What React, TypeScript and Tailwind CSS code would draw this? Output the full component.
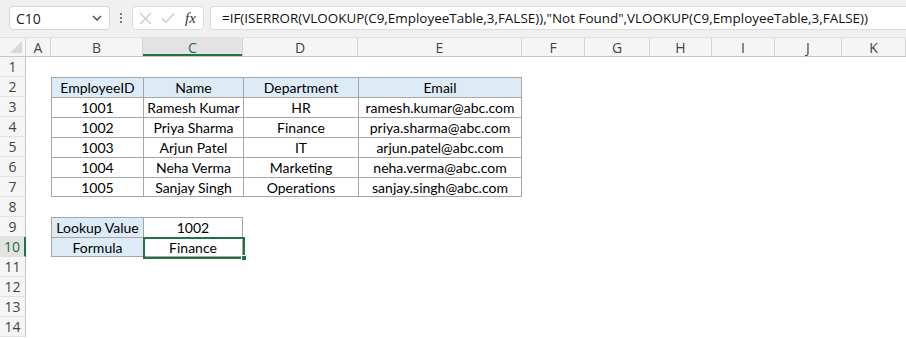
import React from 'react';

const COLS = [
  { id: 'A', w: 25 },
  { id: 'B', w: 92 },
  { id: 'C', w: 100 },
  { id: 'D', w: 115 },
  { id: 'E', w: 164 },
  { id: 'F', w: 63 },
  { id: 'G', w: 65 },
  { id: 'H', w: 62 },
  { id: 'I', w: 63 },
  { id: 'J', w: 67 },
  { id: 'K', w: 64 },
];

const FORMULA =
  '=IF(ISERROR(VLOOKUP(C9,EmployeeTable,3,FALSE)),"Not Found",VLOOKUP(C9,EmployeeTable,3,FALSE))';

type CellDef = { text: string; head?: boolean; left?: boolean; right?: boolean; bottom?: boolean };

const employees = [
  ['1001', 'Ramesh Kumar', 'HR', 'ramesh.kumar@abc.com'],
  ['1002', 'Priya Sharma', 'Finance', 'priya.sharma@abc.com'],
  ['1003', 'Arjun Patel', 'IT', 'arjun.patel@abc.com'],
  ['1004', 'Neha Verma', 'Marketing', 'neha.verma@abc.com'],
  ['1005', 'Sanjay Singh', 'Operations', 'sanjay.singh@abc.com'],
];

// row number -> map of column id -> cell
const buildSheet = () => {
  const rows: Record<number, Record<string, CellDef>> = {};
  const header = ['EmployeeID', 'Name', 'Department', 'Email'];
  const ids = ['B', 'C', 'D', 'E'];
  rows[2] = {};
  header.forEach((h, i) => {
    rows[2][ids[i]] = { text: h, head: true, left: true, right: i === 3 };
  });
  employees.forEach((r, ri) => {
    const rn = ri + 3;
    rows[rn] = {};
    r.forEach((v, i) => {
      rows[rn][ids[i]] = { text: v, left: true, right: i === 3, bottom: ri === 4 };
    });
  });
  rows[9] = {
    B: { text: 'Lookup Value', head: true, left: true },
    C: { text: '1002', left: true, right: true },
  };
  rows[10] = {
    B: { text: 'Formula', head: true, left: true, bottom: true },
    C: { text: 'Finance', left: true, right: true, bottom: true },
  };
  return rows;
};

const sheet = buildSheet();

const Toolbar = () => (
  <div className="flex h-[38px] items-start bg-[#f0f0f0] pt-[6px] border-b border-[#e1e1e1]">
    <div className="ml-[9px] flex h-[24px] w-[101px] items-center justify-between rounded-[4px] border border-[#d6d6d6] bg-white pl-[6px] pr-[7px]">
      <span className="text-[14px] text-[#222]">C10</span>
      <svg width="10" height="6" viewBox="0 0 10 6" fill="none">
        <path d="M1 1 L5 5 L9 1" stroke="#444" strokeWidth="1.3" />
      </svg>
    </div>
    <div className="flex h-[24px] w-[22px] flex-col items-center justify-center gap-[2px]">
      <span className="h-[2px] w-[2px] rounded-full bg-[#555]" />
      <span className="h-[2px] w-[2px] rounded-full bg-[#555]" />
      <span className="h-[2px] w-[2px] rounded-full bg-[#555]" />
    </div>
    <div className="flex h-[24px] w-[72px] items-center rounded-[4px] border border-[#dcdcdc] bg-white pl-[6px]">
      <svg width="13" height="13" viewBox="0 0 13 13">
        <path d="M1 1 L12 12 M12 1 L1 12" stroke="#c8c8c8" strokeWidth="1.2" />
      </svg>
      <svg className="ml-[9px]" width="14" height="12" viewBox="0 0 14 12">
        <path d="M1 6.5 L5 10.5 L13 1.5" stroke="#c8c8c8" strokeWidth="1.2" fill="none" />
      </svg>
      <span className="ml-[10px] text-[15px] italic text-[#333] font-['Liberation_Serif',serif]">fx</span>
    </div>
    <div className="ml-[6px] flex h-[24px] flex-1 items-center rounded-l-[4px] border border-r-0 border-[#dcdcdc] bg-white pl-[11px]">
      <span className="whitespace-nowrap text-[13.45px] text-[#111]">{FORMULA}</span>
    </div>
  </div>
);

const ColHeaders = () => (
  <div className="flex h-[19px] bg-[#f5f5f5] border-b border-[#c6c6c6]">
    <div className="relative w-[26px] shrink-0 border-r border-[#d4d4d4]">
      <svg className="absolute bottom-[3px] right-[3px]" width="12" height="12" viewBox="0 0 12 12">
        <path d="M12 0 L12 12 L0 12 Z" fill="#d8d8d8" />
      </svg>
    </div>
    {COLS.map((c) => (
      <div
        key={c.id}
        style={{ width: c.w }}
        className={
          c.id === 'C'
            ? 'flex shrink-0 items-center justify-center border-r border-[#d4d4d4] bg-[#e3e3e3] text-[14px] text-[#1e6b41] shadow-[inset_0_-2px_0_#217346]'
            : 'flex shrink-0 items-center justify-center border-r border-[#d4d4d4] text-[14px] text-[#444]'
        }
      >
        {c.id}
      </div>
    ))}
  </div>
);

const Cell = ({ col, row }: { col: { id: string; w: number }; row: number }) => {
  const def = sheet[row]?.[col.id];
  const selected = row === 10 && col.id === 'C';
  let cls =
    "relative flex h-[20px] shrink-0 items-center justify-center whitespace-nowrap font-['Lato',sans-serif] text-[14px] text-black";
  if (def) {
    cls += ' border-t border-[#a6a6a6]';
    if (def.left) cls += ' border-l';
    if (def.right) cls += ' border-r';
    if (def.bottom) cls += ' border-b';
    if (def.head) cls += ' bg-[#ddebf7]';
  }
  return (
    <div style={{ width: col.w }} className={cls}>
      {def?.text}
      {selected && (
        <div className="absolute -left-[1px] -top-[1px] h-[22px] w-[102px] border-2 border-[#217346]">
          <div className="absolute -bottom-[4px] -right-[4px] h-[6px] w-[6px] border border-white bg-[#217346]" />
        </div>
      )}
    </div>
  );
};

export default function App() {
  const rows = Array.from({ length: 14 }, (_, i) => i + 1);
  return (
    <div className="h-[338px] w-[906px] overflow-hidden bg-white font-['Open_Sans',sans-serif]">
      <Toolbar />
      <ColHeaders />
      {rows.map((r) => (
        <div key={r} className="flex h-[20px]">
          <div
            className={
              r === 10
                ? 'flex w-[26px] shrink-0 items-center justify-center border-b border-r-2 border-b-[#e2e2e2] border-r-[#217346] bg-[#e3e3e3] text-[14px] text-[#1e6b41]'
                : 'flex w-[26px] shrink-0 items-center justify-center border-b border-r border-b-[#e2e2e2] border-r-[#c6c6c6] bg-[#f5f5f5] text-[14px] text-[#444]'
            }
          >
            {r}
          </div>
          {COLS.map((c) => (
            <Cell key={c.id} col={c} row={r} />
          ))}
        </div>
      ))}
    </div>
  );
}
